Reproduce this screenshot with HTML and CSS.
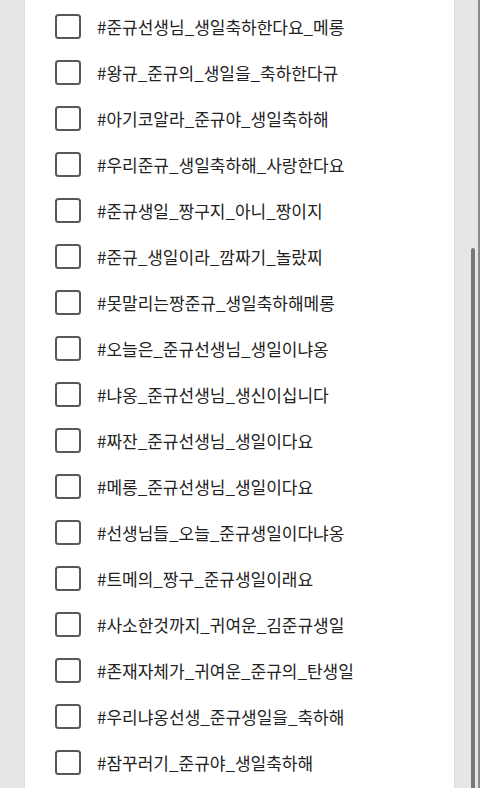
FILE: index.html
```html
<!DOCTYPE html>
<html lang="ko">
<head>
    <meta charset="UTF-8">
    <meta name="viewport" content="width=device-width, initial-scale=1.0">
    <title>생일 해시태그</title>
    <link rel="stylesheet" href="styles.css">
</head>
<body>
    <div class="page">
        <div class="gutter left"></div>

        <div class="card">
            <ul class="tag-list">
                <li class="tag-item"><span class="box"></span><span class="label">#준규선생님_생일축하한다요_메롱</span></li>
                <li class="tag-item"><span class="box"></span><span class="label">#왕규_준규의_생일을_축하한다규</span></li>
                <li class="tag-item"><span class="box"></span><span class="label">#아기코알라_준규야_생일축하해</span></li>
                <li class="tag-item"><span class="box"></span><span class="label">#우리준규_생일축하해_사랑한다요</span></li>
                <li class="tag-item"><span class="box"></span><span class="label">#준규생일_짱구지_아니_짱이지</span></li>
                <li class="tag-item"><span class="box"></span><span class="label">#준규_생일이라_깜짜기_놀랐찌</span></li>
                <li class="tag-item"><span class="box"></span><span class="label">#못말리는짱준규_생일축하해메롱</span></li>
                <li class="tag-item"><span class="box"></span><span class="label">#오늘은_준규선생님_생일이냐옹</span></li>
                <li class="tag-item"><span class="box"></span><span class="label">#냐옹_준규선생님_생신이십니다</span></li>
                <li class="tag-item"><span class="box"></span><span class="label">#짜잔_준규선생님_생일이다요</span></li>
                <li class="tag-item"><span class="box"></span><span class="label">#메롱_준규선생님_생일이다요</span></li>
                <li class="tag-item"><span class="box"></span><span class="label">#선생님들_오늘_준규생일이다냐옹</span></li>
                <li class="tag-item"><span class="box"></span><span class="label">#트메의_짱구_준규생일이래요</span></li>
                <li class="tag-item"><span class="box"></span><span class="label">#사소한것까지_귀여운_김준규생일</span></li>
                <li class="tag-item"><span class="box"></span><span class="label">#존재자체가_귀여운_준규의_탄생일</span></li>
                <li class="tag-item"><span class="box"></span><span class="label">#우리냐옹선생_준규생일을_축하해</span></li>
                <li class="tag-item"><span class="box"></span><span class="label">#잠꾸러기_준규야_생일축하해</span></li>
            </ul>
        </div>

        <div class="gutter right">
            <div class="scroll-track">
                <div class="scroll-thumb"></div>
            </div>
        </div>
    </div>
</body>
</html>
```

FILE: styles.css
```css
* {
    margin: 0;
    padding: 0;
    box-sizing: border-box;
}

body {
    font-family: 'Noto Sans CJK KR', 'Noto Sans', sans-serif;
    background: #e6e6e6;
    height: 788px;
    overflow: hidden;
}

.page {
    display: flex;
    height: 788px;
}

.gutter {
    background: #e6e6e6;
}

.gutter.left {
    width: 25px;
    border-right: 1px solid #dcdcdc;
}

.gutter.right {
    width: 26px;
    border-left: 1px solid #dcdcdc;
    display: flex;
    justify-content: flex-end;
}

.scroll-track {
    width: 9px;
    display: flex;
    flex-direction: column;
    justify-content: flex-end;
    border-right: 2px solid #8a8a8a;
}

.scroll-thumb {
    width: 4px;
    height: 540px;
    background: #787878;
    border-radius: 2px 2px 0 0;
}

.card {
    flex: 1;
    background: #ffffff;
    overflow: hidden;
}

.tag-list {
    list-style: none;
    padding: 3px 0 0 30px;
}

.tag-item {
    display: flex;
    align-items: center;
    height: 46px;
    gap: 16px;
}

.box {
    width: 26px;
    height: 25px;
    border: 2.5px solid #585858;
    border-radius: 3.5px;
    flex-shrink: 0;
}

.label {
    font-size: 17px;
    color: #222222;
    white-space: nowrap;
}
```
